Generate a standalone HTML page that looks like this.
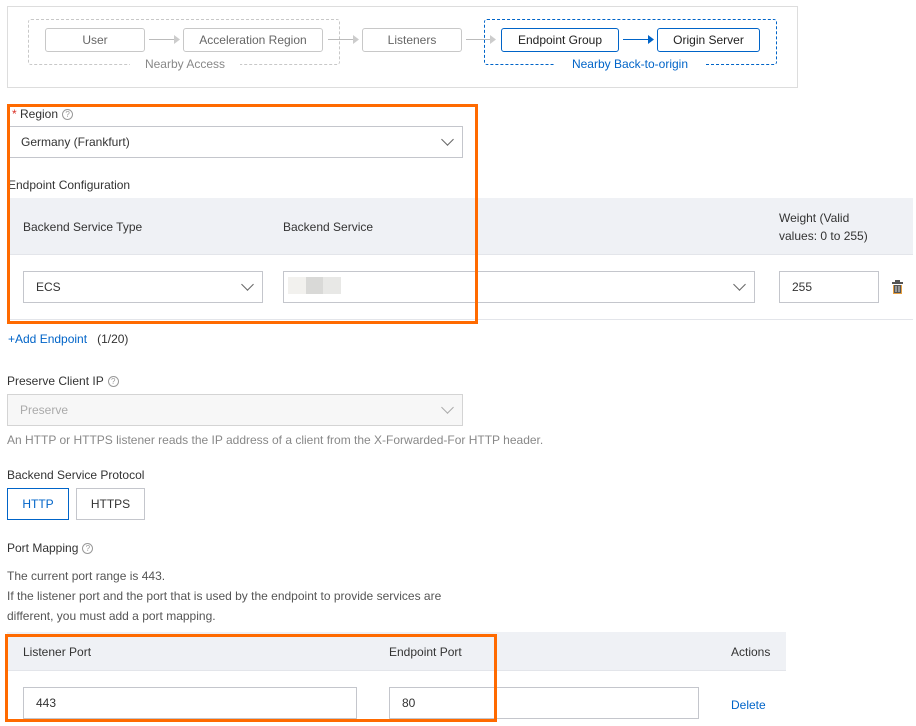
<!DOCTYPE html>
<html><head><style>
*{box-sizing:border-box;margin:0;padding:0}
body{width:916px;height:726px;background:#fff;font-family:"Liberation Sans",Arial,sans-serif;font-size:12px;color:#333;position:relative;overflow:hidden}
.a{position:absolute}
.box{position:absolute;border:1px solid #c8c8c8;border-radius:3px;text-align:center;line-height:23px;color:#666;font-size:12px;background:#fff}
.bb{border-color:#0064c8;color:#222}
.sel{position:absolute;border:1px solid #c4c6cc;height:32px;line-height:30px;padding-left:12px;background:#fff}
.chev{position:absolute;right:10px;width:9px;height:9px;border-right:1px solid #666;border-bottom:1px solid #666;transform:rotate(45deg);top:8px}
.lbl{position:absolute;font-size:12px;color:#333}
.or{position:absolute;border:3px solid #ff6a00}
.q{display:inline-block;width:11px;height:11px;border:1px solid #999;border-radius:50%;font-size:8px;line-height:9px;text-align:center;color:#999;vertical-align:1px;margin-left:4px}
</style></head><body>
<div class="a" style="left:7px;top:6px;width:791px;height:82px;border:1px solid #ddd"></div>
<div class="a" style="left:28px;top:19px;width:312px;height:46px;border:1px dashed #c8c8c8;border-radius:3px"></div>
<div class="a" style="left:130px;top:57px;width:110px;height:16px;background:#fff;text-align:center;color:#888">Nearby Access</div>
<div class="a" style="left:484px;top:19px;width:293px;height:46px;border:1px dashed #0064c8;border-radius:3px"></div>
<div class="a" style="left:555px;top:57px;width:150px;height:16px;background:#fff;text-align:center;color:#0064c8">Nearby Back-to-origin</div>
<div class="box" style="left:45px;top:28px;width:100px;height:24px">User</div>
<div class="box" style="left:183px;top:28px;width:140px;height:24px">Acceleration Region</div>
<div class="box" style="left:362px;top:28px;width:100px;height:24px">Listeners</div>
<div class="box bb" style="left:501px;top:28px;width:118px;height:24px">Endpoint Group</div>
<div class="box bb" style="left:657px;top:28px;width:103px;height:24px">Origin Server</div>
<svg class="a" style="left:0;top:0" width="916" height="80">
<g stroke="#bbb" fill="#ccc"><line x1="149" y1="39.5" x2="175" y2="39.5"/><path d="M174 35l6 4.5-6 4.5z" stroke="none"/>
<line x1="328" y1="39.5" x2="354" y2="39.5"/><path d="M353 35l6 4.5-6 4.5z" stroke="none"/>
<line x1="466" y1="39.5" x2="490" y2="39.5"/><path d="M490 35l6 4.5-6 4.5z" stroke="none"/></g>
<line x1="623" y1="39.5" x2="648" y2="39.5" stroke="#0064c8"/><path d="M648 35l6 4.5-6 4.5z" fill="#0064c8"/>
</svg>

<div class="lbl" style="left:12px;top:107px"><span style="color:#d93026">*</span> Region<span class="q">?</span></div>
<div class="sel" style="left:8px;top:126px;width:455px">Germany (Frankfurt)<span class="chev"></span></div>
<div class="lbl" style="left:8px;top:178px">Endpoint Configuration</div>
<div class="a" style="left:8px;top:198px;width:905px;height:57px;background:#eff1f5;border-bottom:1px solid #e3e5ea"></div>
<div class="lbl" style="left:23px;top:220px">Backend Service Type</div>
<div class="lbl" style="left:283px;top:220px">Backend Service</div>
<div class="lbl" style="left:779px;top:209px;line-height:18px">Weight (Valid<br>values: 0 to 255)</div>
<div class="sel" style="left:23px;top:271px;width:240px">ECS<span class="chev"></span></div>
<div class="sel" style="left:283px;top:271px;width:472px"><span class="chev"></span></div>
<div class="a" style="left:288px;top:277px;width:18px;height:17px;background:#f2f1ee"></div>
<div class="a" style="left:306px;top:277px;width:17px;height:17px;background:#d9d9d7"></div>
<div class="a" style="left:323px;top:277px;width:18px;height:17px;background:#e8e8e6"></div>
<div class="sel" style="left:779px;top:271px;width:100px">255</div>
<svg class="a" style="left:891px;top:280px" width="13" height="15"><rect x="1" y="2" width="11" height="2" fill="#555"/><rect x="4" y="0" width="5" height="2" fill="#555"/><rect x="2" y="5" width="9" height="9" fill="#e8a040"/><rect x="3" y="5" width="7" height="8" fill="#555"/><g stroke="#ddd"><line x1="5" y1="6" x2="5" y2="12"/><line x1="8" y1="6" x2="8" y2="12"/></g></svg>
<div class="a" style="left:8px;top:319px;width:905px;height:1px;background:#e3e5ea"></div>
<div class="or" style="left:7px;top:104px;width:471px;height:220px"></div>

<div class="lbl" style="left:8px;top:332px"><span style="color:#0064c8">+Add Endpoint</span>&nbsp;&nbsp; (1/20)</div>
<div class="lbl" style="left:7px;top:374px">Preserve Client IP<span class="q">?</span></div>
<div class="sel" style="left:7px;top:394px;width:456px;background:#f7f7f7;color:#aaa;border-color:#d4d4d4">Preserve<span class="chev" style="border-color:#aaa"></span></div>
<div class="lbl" style="left:7px;top:433px;color:#888">An HTTP or HTTPS listener reads the IP address of a client from the X-Forwarded-For HTTP header.</div>
<div class="lbl" style="left:7px;top:468px">Backend Service Protocol</div>
<div class="a" style="left:7px;top:488px;width:62px;height:32px;border:1px solid #0064c8;color:#0064c8;text-align:center;line-height:30px">HTTP</div>
<div class="a" style="left:76px;top:488px;width:69px;height:32px;border:1px solid #c4c6cc;text-align:center;line-height:30px">HTTPS</div>
<div class="lbl" style="left:7px;top:541px">Port Mapping<span class="q">?</span></div>
<div class="lbl" style="left:7px;top:566px;line-height:20px;color:#555">The current port range is 443.<br>If the listener port and the port that is used by the endpoint to provide services are<br>different, you must add a port mapping.</div>
<div class="a" style="left:7px;top:632px;width:779px;height:39px;background:#eff1f5;border-bottom:1px solid #e3e5ea"></div>
<div class="lbl" style="left:23px;top:645px">Listener Port</div>
<div class="lbl" style="left:389px;top:645px">Endpoint Port</div>
<div class="lbl" style="left:731px;top:645px">Actions</div>
<div class="sel" style="left:23px;top:687px;width:334px">443</div>
<div class="sel" style="left:389px;top:687px;width:310px">80</div>
<div class="lbl" style="left:731px;top:698px;color:#0064c8">Delete</div>
<div class="or" style="left:5px;top:634px;width:492px;height:88px"></div>
</body></html>
